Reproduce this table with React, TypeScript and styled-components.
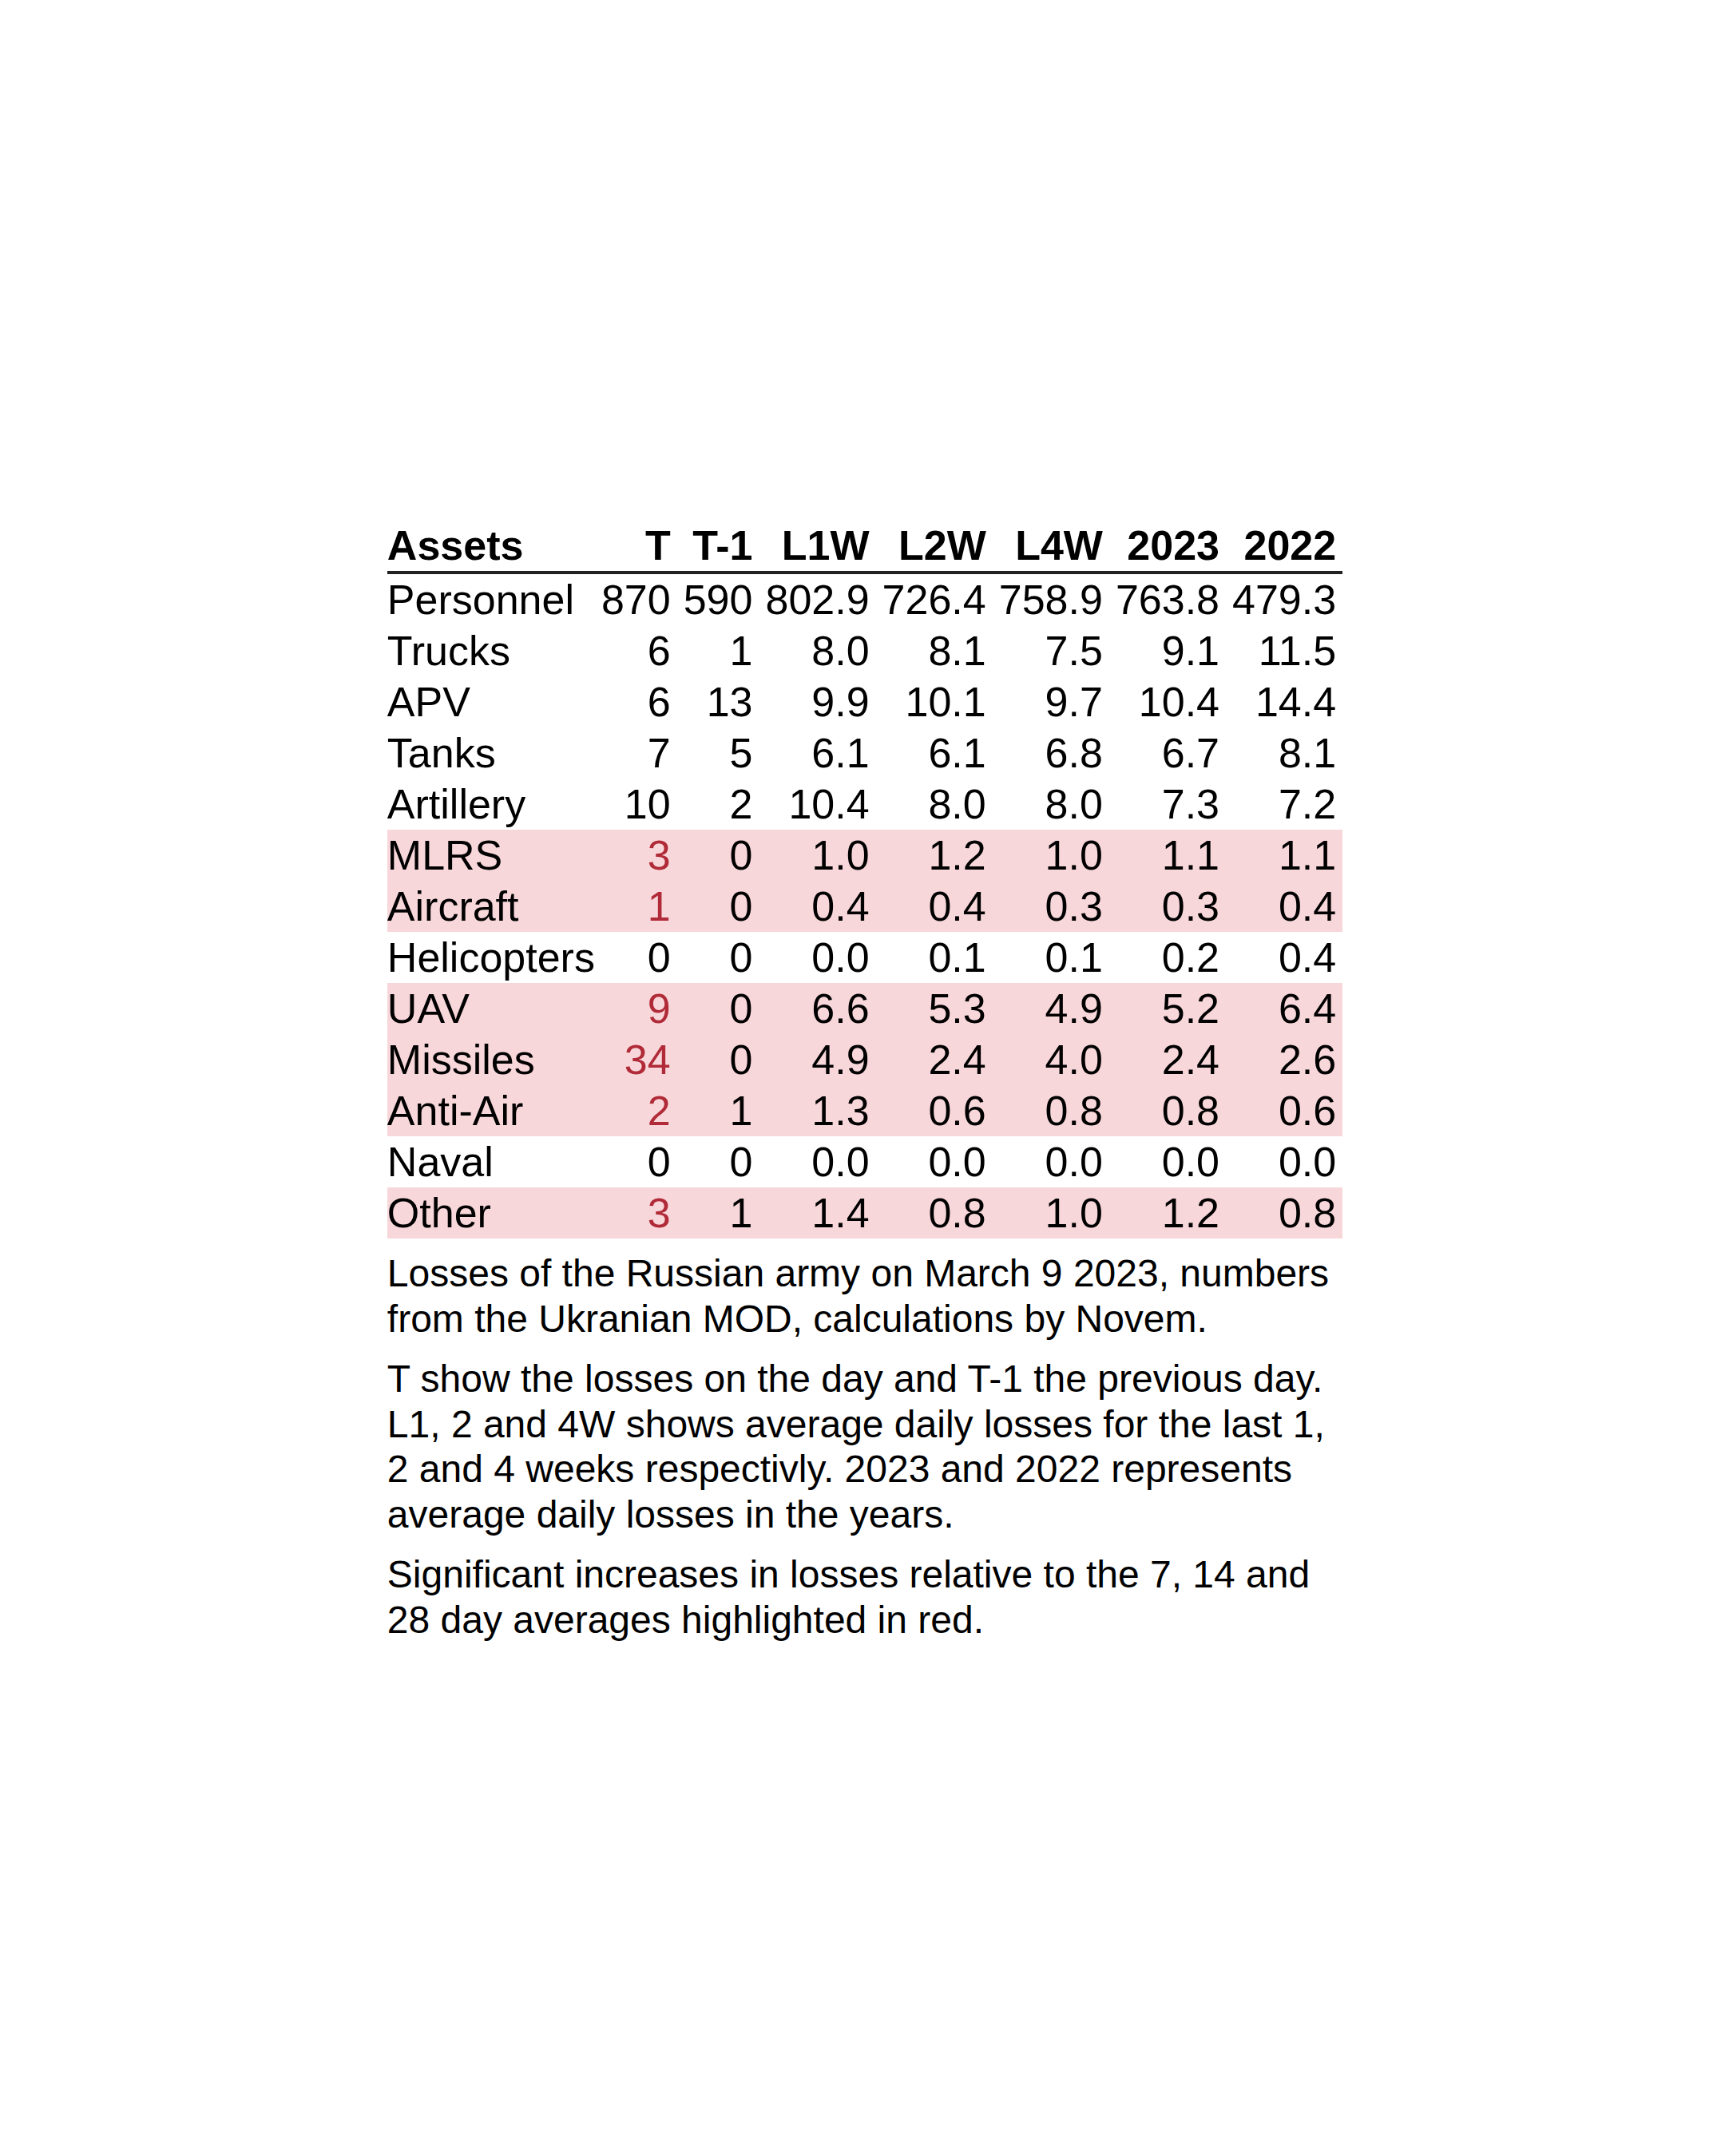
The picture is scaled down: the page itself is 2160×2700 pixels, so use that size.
import React from "react";
import styled, { createGlobalStyle } from "styled-components";

type Row = {
  asset: string;
  values: string[];
  highlight?: boolean;
};

const headers = ["T", "T-1", "L1W", "L2W", "L4W", "2023", "2022"];

const rows: Row[] = [
  { asset: "Personnel", values: ["870", "590", "802.9", "726.4", "758.9", "763.8", "479.3"] },
  { asset: "Trucks", values: ["6", "1", "8.0", "8.1", "7.5", "9.1", "11.5"] },
  { asset: "APV", values: ["6", "13", "9.9", "10.1", "9.7", "10.4", "14.4"] },
  { asset: "Tanks", values: ["7", "5", "6.1", "6.1", "6.8", "6.7", "8.1"] },
  { asset: "Artillery", values: ["10", "2", "10.4", "8.0", "8.0", "7.3", "7.2"] },
  { asset: "MLRS", values: ["3", "0", "1.0", "1.2", "1.0", "1.1", "1.1"], highlight: true },
  { asset: "Aircraft", values: ["1", "0", "0.4", "0.4", "0.3", "0.3", "0.4"], highlight: true },
  { asset: "Helicopters", values: ["0", "0", "0.0", "0.1", "0.1", "0.2", "0.4"] },
  { asset: "UAV", values: ["9", "0", "6.6", "5.3", "4.9", "5.2", "6.4"], highlight: true },
  { asset: "Missiles", values: ["34", "0", "4.9", "2.4", "4.0", "2.4", "2.6"], highlight: true },
  { asset: "Anti-Air", values: ["2", "1", "1.3", "0.6", "0.8", "0.8", "0.6"], highlight: true },
  { asset: "Naval", values: ["0", "0", "0.0", "0.0", "0.0", "0.0", "0.0"] },
  { asset: "Other", values: ["3", "1", "1.4", "0.8", "1.0", "1.2", "0.8"], highlight: true },
];

const App: React.FC = () => {
  return (
    <Page>
      <GlobalStyle />
      <LossTable>
        <thead>
          <tr>
            <HeadCell $left>Assets</HeadCell>
            {headers.map((h) => (
              <HeadCell key={h}>{h}</HeadCell>
            ))}
          </tr>
        </thead>
        <tbody>
          {rows.map((row) => (
            <BodyRow key={row.asset} $highlight={row.highlight}>
              <AssetCell>{row.asset}</AssetCell>
              {row.values.map((v, i) => (
                <NumCell key={i} $red={row.highlight && i === 0}>
                  {v}
                </NumCell>
              ))}
            </BodyRow>
          ))}
        </tbody>
        <Caption>
          <Note>
            Losses of the Russian army on March 9 2023, numbers from the
            Ukranian MOD, calculations by Novem.
          </Note>
          <Note>
            T show the losses on the day and T-1 the previous day. L1, 2 and 4W
            shows average daily losses for the last 1, 2 and 4 weeks
            respectivly. 2023 and 2022 represents average daily losses in the
            years.
          </Note>
          <Note>
            Significant increases in losses relative to the 7, 14 and 28 day
            averages highlighted in red.
          </Note>
        </Caption>
      </LossTable>
    </Page>
  );
};
export default App;

const GlobalStyle = createGlobalStyle`
  html, body {
    margin: 0;
    padding: 0;
    background: #ffffff;
  }
  body {
    font-family: "Liberation Sans", Arial, sans-serif;
    color: #000000;
  }
`;

const Page = styled("div")({
  minHeight: "2700px",
  display: "flex",
  justifyContent: "center",
  alignItems: "flex-start",
  padding: "651px 0 0 6px",
  boxSizing: "border-box",
});

const LossTable = styled("table")({
  borderCollapse: "separate",
  borderSpacing: 0,
  fontSize: "52px",
  lineHeight: "64px",
});

const HeadCell = styled("th")<{ $left?: boolean }>((p) => ({
  fontWeight: 700,
  textAlign: p.$left ? "left" : "right",
  padding: p.$left ? "0" : "0 8px",
  borderBottom: "4px solid #222222",
  whiteSpace: "nowrap",
}));

const BodyRow = styled("tr")<{ $highlight?: boolean }>((p) => ({
  background: p.$highlight ? "#f8d7da" : "transparent",
}));

const AssetCell = styled("td")({
  textAlign: "left",
  padding: 0,
  whiteSpace: "nowrap",
});

const NumCell = styled("td")<{ $red?: boolean }>((p) => ({
  textAlign: "right",
  padding: "0 8px",
  whiteSpace: "nowrap",
  color: p.$red ? "#b02a37" : "#000000",
}));

const Caption = styled("caption")({
  captionSide: "bottom",
  textAlign: "left",
  fontSize: "48px",
  lineHeight: "56.5px",
  paddingTop: "16px",
});

const Note = styled("p")({
  margin: "0 0 19px 0",
});
